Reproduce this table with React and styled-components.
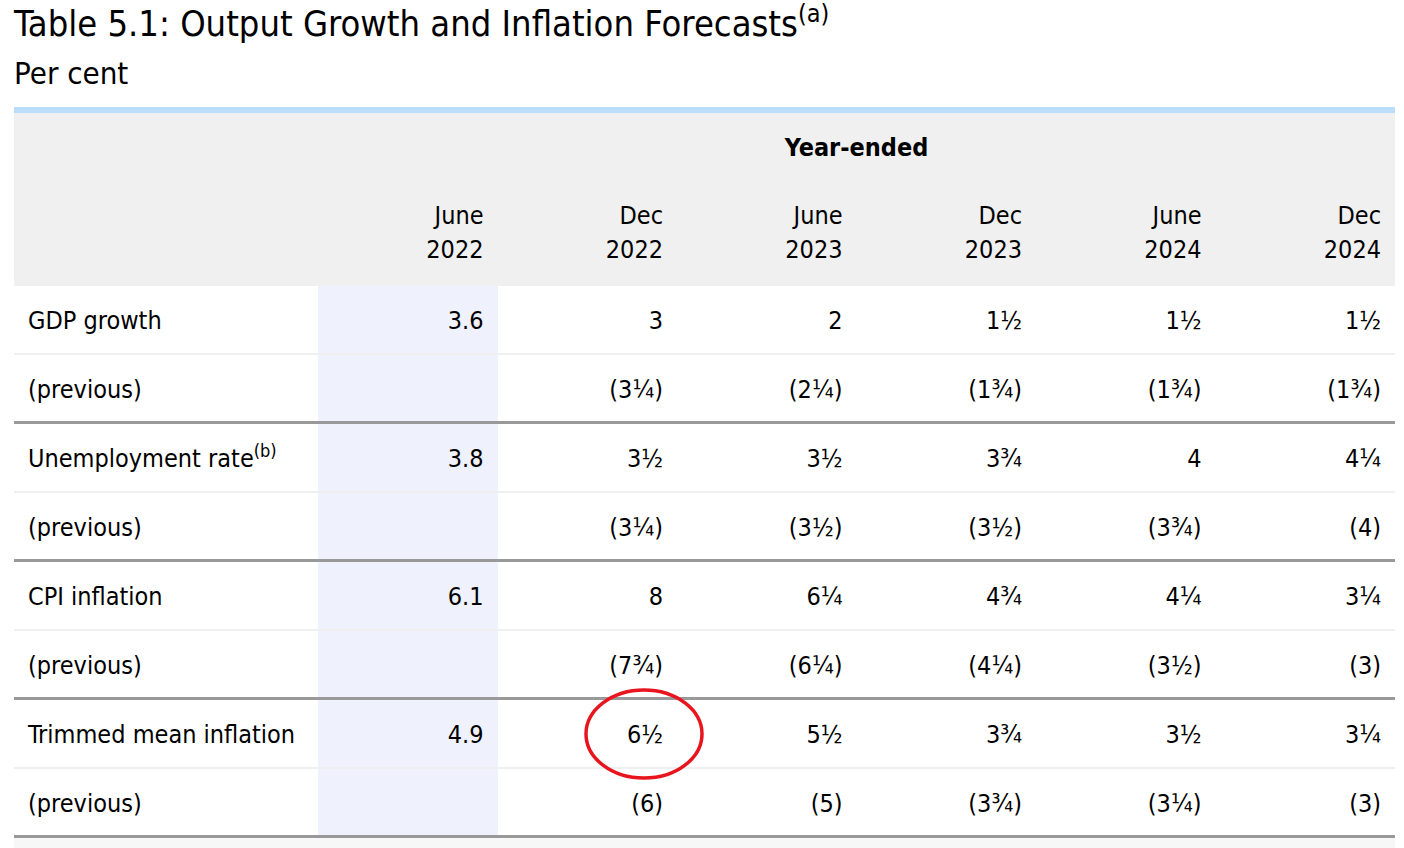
import React from 'react';
import styled, { createGlobalStyle } from 'styled-components';

const GlobalStyle = createGlobalStyle`
  html, body {
    margin: 0;
    padding: 0;
    background: #ffffff;
  }
  body {
    font-family: "DejaVu Sans Condensed", "DejaVu Sans", Verdana, sans-serif;
    color: #000000;
  }
`;

const Page = styled.div`
  padding: 0 9px 0 14px;
  width: 1381px;
`;

const Title = styled.h2`
  margin: 0;
  padding-top: 4px;
  font-size: 36px;
  font-weight: normal;
  line-height: 40px;
  sup {
    font-size: 25px;
    line-height: 0;
    vertical-align: baseline;
    position: relative;
    top: -14px;
  }
`;

const Units = styled.div`
  font-size: 31px;
  line-height: 36px;
  margin-top: 11px;
  margin-bottom: 16px;
`;

const TableWrap = styled.div`
  position: relative;
`;

const Table = styled.table`
  width: 100%;
  border-collapse: collapse;
  table-layout: fixed;
  border-top: 6px solid #bbdcfa;
  font-size: 25px;
`;

const Head = styled.thead`
  background: #f0f0f0;
`;

const GroupCell = styled.th`
  height: 69px;
  padding: 0;
  text-align: center;
  font-weight: bold;
  vertical-align: middle;
`;

const MonthCell = styled.th`
  height: 102px;
  padding: 0 14px 2px 0;
  text-align: right;
  font-weight: normal;
  line-height: 34px;
  vertical-align: middle;
`;

const Row = styled.tr`
  border-bottom: ${p => (p.$last ? '3px solid #999999' : '2px solid #efefef')};
`;

const LabelCell = styled.td`
  height: ${p => (p.$previous ? '64px' : '65px')};
  padding: 2px 0 0 14px;
  text-align: left;
  vertical-align: middle;
  sup {
    font-size: 18px;
    line-height: 0;
    vertical-align: baseline;
    position: relative;
    top: -10px;
  }
`;

const ValueCell = styled.td`
  padding: 2px 14px 0 0;
  text-align: right;
  vertical-align: middle;
  background: ${p => (p.$actual ? '#eff1fd' : 'transparent')};
`;

const Notes = styled.div`
  height: 20px;
  background: #f7f7f7;
`;

const Circle = styled.svg`
  position: absolute;
  left: 569px;
  top: 580px;
  width: 122px;
  height: 94px;
  pointer-events: none;
`;

const columns = [
  ['June', '2022'],
  ['Dec', '2022'],
  ['June', '2023'],
  ['Dec', '2023'],
  ['June', '2024'],
  ['Dec', '2024'],
];

const series = [
  {
    label: 'GDP growth',
    values: ['3.6', '3', '2', '1½', '1½', '1½'],
    previous: ['', '(3¼)', '(2¼)', '(1¾)', '(1¾)', '(1¾)'],
  },
  {
    label: 'Unemployment rate',
    note: 'b',
    values: ['3.8', '3½', '3½', '3¾', '4', '4¼'],
    previous: ['', '(3¼)', '(3½)', '(3½)', '(3¾)', '(4)'],
  },
  {
    label: 'CPI inflation',
    values: ['6.1', '8', '6¼', '4¾', '4¼', '3¼'],
    previous: ['', '(7¾)', '(6¼)', '(4¼)', '(3½)', '(3)'],
  },
  {
    label: 'Trimmed mean inflation',
    values: ['4.9', '6½', '5½', '3¾', '3½', '3¼'],
    previous: ['', '(6)', '(5)', '(3¾)', '(3¼)', '(3)'],
  },
];

const App = () => {
  return (
    <Page>
      <GlobalStyle />
      <Title>
        Table 5.1: Output Growth and Inflation Forecasts<sup>(a)</sup>
      </Title>
      <Units>Per cent</Units>

      <TableWrap>
        <Table>
          <colgroup>
            <col style={{ width: 304 }} />
            {columns.map((c, i) => (
              <col key={i} />
            ))}
          </colgroup>
          <Head>
            <tr>
              <th />
              <GroupCell colSpan={6}>Year-ended</GroupCell>
            </tr>
            <tr>
              <th />
              {columns.map(([month, year]) => (
                <MonthCell key={month + year}>
                  {month}
                  <br />
                  {year}
                </MonthCell>
              ))}
            </tr>
          </Head>
          <tbody>
            {series.map(s => (
              <React.Fragment key={s.label}>
                <Row>
                  <LabelCell>
                    {s.label}
                    {s.note && <sup>({s.note})</sup>}
                  </LabelCell>
                  {s.values.map((v, i) => (
                    <ValueCell key={i} $actual={i === 0}>{v}</ValueCell>
                  ))}
                </Row>
                <Row $last>
                  <LabelCell $previous>(previous)</LabelCell>
                  {s.previous.map((v, i) => (
                    <ValueCell key={i} $actual={i === 0}>{v}</ValueCell>
                  ))}
                </Row>
              </React.Fragment>
            ))}
          </tbody>
        </Table>

        <Circle viewBox="0 0 122 94">
          <ellipse cx="61" cy="47" rx="58" ry="44" fill="none" stroke="#e8151f" strokeWidth="3.5" />
        </Circle>
      </TableWrap>
      <Notes />
    </Page>
  );
};

export default App;
